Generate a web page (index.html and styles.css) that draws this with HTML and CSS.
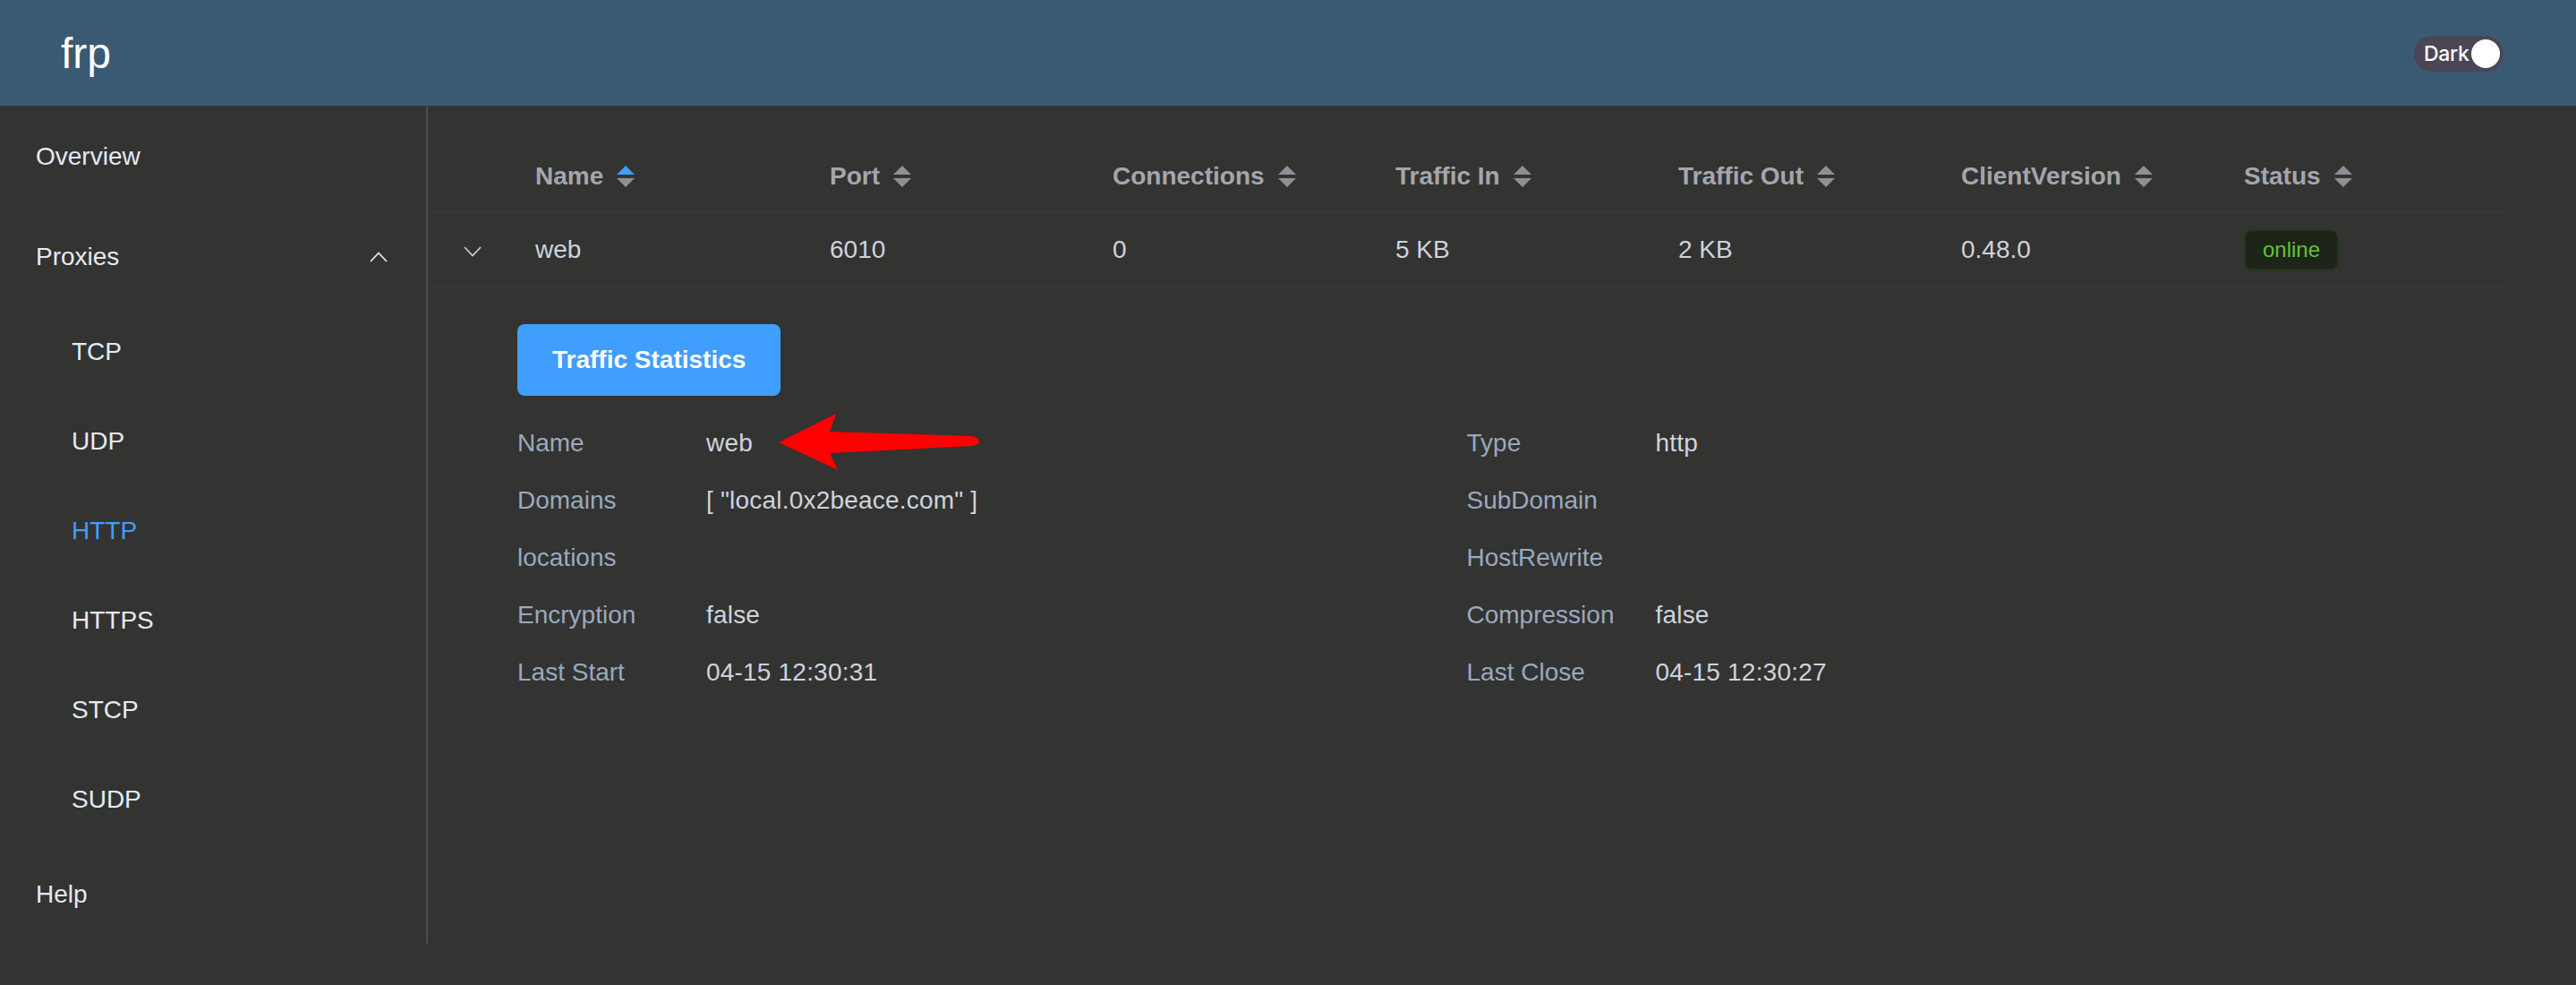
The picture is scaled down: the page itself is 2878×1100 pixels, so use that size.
FILE: index.html
```html
<!DOCTYPE html>
<html lang="en">
<head>
<meta charset="utf-8">
<title>frp</title>
<link rel="stylesheet" href="styles.css">
</head>
<body>
<header class="topbar">
  <div class="brand">frp</div>
  <div class="theme-switch"><span class="switch-text">Dark</span><span class="knob"></span></div>
</header>
<div class="layout">
  <aside class="sidebar">
    <ul class="menu">
      <li class="menu-item">Overview</li>
      <li class="submenu">
        <div class="menu-item submenu-title">
          <span>Proxies</span>
          <svg class="chev-up" width="20" height="12" viewBox="0 0 20 12"><polyline points="1,11 10,1.5 19,11" fill="none" stroke="#e5eaf3" stroke-width="1.8"/></svg>
        </div>
        <ul class="submenu-list">
          <li class="sub-item">TCP</li>
          <li class="sub-item">UDP</li>
          <li class="sub-item active">HTTP</li>
          <li class="sub-item">HTTPS</li>
          <li class="sub-item">STCP</li>
          <li class="sub-item">SUDP</li>
        </ul>
      </li>
      <li class="menu-item">Help</li>
    </ul>
  </aside>
  <main class="main">
    <table class="proxy-table">
      <colgroup>
        <col class="c-expand"><col class="c-name"><col class="c-col"><col class="c-col"><col class="c-col"><col class="c-col"><col class="c-col"><col class="c-col">
      </colgroup>
      <thead>
        <tr>
          <th></th>
          <th><span class="th-inner">Name<span class="caret-wrap"><i class="caret up active"></i><i class="caret down"></i></span></span></th>
          <th><span class="th-inner">Port<span class="caret-wrap"><i class="caret up"></i><i class="caret down"></i></span></span></th>
          <th><span class="th-inner">Connections<span class="caret-wrap"><i class="caret up"></i><i class="caret down"></i></span></span></th>
          <th><span class="th-inner">Traffic In<span class="caret-wrap"><i class="caret up"></i><i class="caret down"></i></span></span></th>
          <th><span class="th-inner">Traffic Out<span class="caret-wrap"><i class="caret up"></i><i class="caret down"></i></span></span></th>
          <th><span class="th-inner">ClientVersion<span class="caret-wrap"><i class="caret up"></i><i class="caret down"></i></span></span></th>
          <th><span class="th-inner">Status<span class="caret-wrap"><i class="caret up"></i><i class="caret down"></i></span></span></th>
        </tr>
      </thead>
      <tbody>
        <tr class="data-row">
          <td class="expand-cell"><svg width="20" height="12" viewBox="0 0 20 12"><polyline points="1,1 10,10.5 19,1" fill="none" stroke="#cfd3dc" stroke-width="1.6"/></svg></td>
          <td>web</td>
          <td>6010</td>
          <td>0</td>
          <td>5 KB</td>
          <td>2 KB</td>
          <td>0.48.0</td>
          <td><span class="tag">online</span></td>
        </tr>
        <tr class="expanded-row">
          <td colspan="8" class="expanded-cell">
            <button class="btn-primary">Traffic Statistics</button>
            <div class="detail-form">
              <div class="form-item"><span class="label">Name</span><span class="value">web</span></div>
              <div class="form-item"><span class="label">Type</span><span class="value">http</span></div>
              <div class="form-item"><span class="label">Domains</span><span class="value">[ "local.0x2beace.com" ]</span></div>
              <div class="form-item"><span class="label">SubDomain</span><span class="value"></span></div>
              <div class="form-item"><span class="label">locations</span><span class="value"></span></div>
              <div class="form-item"><span class="label">HostRewrite</span><span class="value"></span></div>
              <div class="form-item"><span class="label">Encryption</span><span class="value">false</span></div>
              <div class="form-item"><span class="label">Compression</span><span class="value">false</span></div>
              <div class="form-item"><span class="label">Last Start</span><span class="value">04-15 12:30:31</span></div>
              <div class="form-item"><span class="label">Last Close</span><span class="value">04-15 12:30:27</span></div>
            </div>
          </td>
        </tr>
      </tbody>
    </table>
  </main>
</div>
<svg class="annotation-arrow" width="230" height="70" viewBox="866 460 230 70">
  <path d="M870 494 L934 462 L927 482 L1086 487 Q1094 489 1094 493 Q1094 497 1086 498 L927 506 L936 525 Z" fill="#ff0000"/>
</svg>
</body>
</html>
```

FILE: styles.css
```css
* { box-sizing: border-box; }
html, body { margin: 0; padding: 0; }
body {
  background: #333332;
  font-family: "Liberation Sans", Arial, Helvetica, sans-serif;
  color: #cfd3dc;
  min-height: 1100px;
  position: relative;
}
.topbar {
  height: 118px;
  background: #3a5a73;
  display: flex;
  align-items: center;
  justify-content: space-between;
  padding: 0 81px 0 68px;
}
.brand {
  color: #ffffff;
  font-size: 48px;
  line-height: 1;
  margin-top: 2px;
}
.theme-switch {
  width: 100px;
  height: 40px;
  border-radius: 20px;
  background: #4a4656;
  display: flex;
  align-items: center;
  padding: 0 4px 0 11px;
  margin-top: 2px;
}
.switch-text {
  font-family: Inter, "Noto Sans", sans-serif;
  font-size: 23px;
  font-weight: 500;
  color: #ffffff;
  flex: 1;
  letter-spacing: -0.3px;
}
.knob {
  width: 32px;
  height: 32px;
  border-radius: 50%;
  background: #ffffff;
}
.layout {
  display: flex;
  align-items: flex-start;
}
.sidebar {
  width: 478px;
  flex: none;
  border-right: 2px solid #4c4d4f;
}
.menu, .submenu-list {
  list-style: none;
  margin: 0;
  padding: 0;
}
.menu-item {
  height: 112px;
  display: flex;
  align-items: center;
  padding: 2px 40px 0;
  font-size: 28px;
  color: #e5eaf3;
}
.submenu-title {
  justify-content: space-between;
}
.chev-up { margin-right: 3px; }
.sub-item {
  height: 100px;
  display: flex;
  align-items: center;
  padding: 2px 0 0 80px;
  font-size: 28px;
  color: #e5eaf3;
}
.sub-item.active { color: #409eff; }
.main {
  flex: 1;
  padding: 39px 79px 0 0;
}
.proxy-table {
  width: 2321px;
  table-layout: fixed;
  border-collapse: collapse;
  font-size: 28px;
}
.c-expand { width: 96px; }
.c-name { width: 329px; }
.c-col { width: 316px; }
.proxy-table th {
  height: 80px;
  padding: 0 24px;
  text-align: left;
  color: #a3a6ad;
  font-weight: bold;
  border-bottom: 2px solid #373738;
  vertical-align: middle;
}
.th-inner {
  display: inline-flex;
  align-items: center;
}
.caret-wrap {
  display: inline-flex;
  flex-direction: column;
  align-items: center;
  gap: 4px;
  margin-left: 15px;
}
.caret {
  display: block;
  width: 0;
  height: 0;
  border-left: 10px solid transparent;
  border-right: 10px solid transparent;
}
.caret.up { border-bottom: 10px solid #8d9095; }
.caret.down { border-top: 10px solid #8d9095; }
.caret.up.active { border-bottom-color: #409eff; }
.data-row td {
  height: 83px;
  padding: 0 24px;
  color: #cfd3dc;
  border-bottom: 2px solid #373738;
  vertical-align: middle;
}
.data-row td.expand-cell {
  padding: 0;
  text-align: center;
}
.expand-cell svg { display: block; margin: 4px 0 0 40px; }
.tag {
  display: inline-flex;
  align-items: center;
  height: 46px;
  padding: 0 19px;
  font-size: 24px;
  color: #67c23a;
  background: #1c2518;
  border: 2px solid #25371c;
  border-radius: 8px;
}
.expanded-cell {
  padding: 41px 100px 40px;
}
.btn-primary {
  display: block;
  height: 80px;
  padding: 0 39px;
  background: #409eff;
  color: #ffffff;
  border: none;
  border-radius: 8px;
  font-family: "Liberation Sans", Arial, sans-serif;
  font-size: 28px;
  font-weight: bold;
}
.detail-form {
  margin-top: 21px;
  display: grid;
  grid-template-columns: 1fr 1fr;
}
.form-item {
  display: flex;
  height: 64px;
  align-items: center;
  font-size: 28px;
}
.label {
  width: 211px;
  flex: none;
  color: #99a9bf;
}
.value {
  color: #cfd3dc;
  letter-spacing: 0.2px;
}
.annotation-arrow {
  position: absolute;
  left: 866px;
  top: 460px;
}
```
